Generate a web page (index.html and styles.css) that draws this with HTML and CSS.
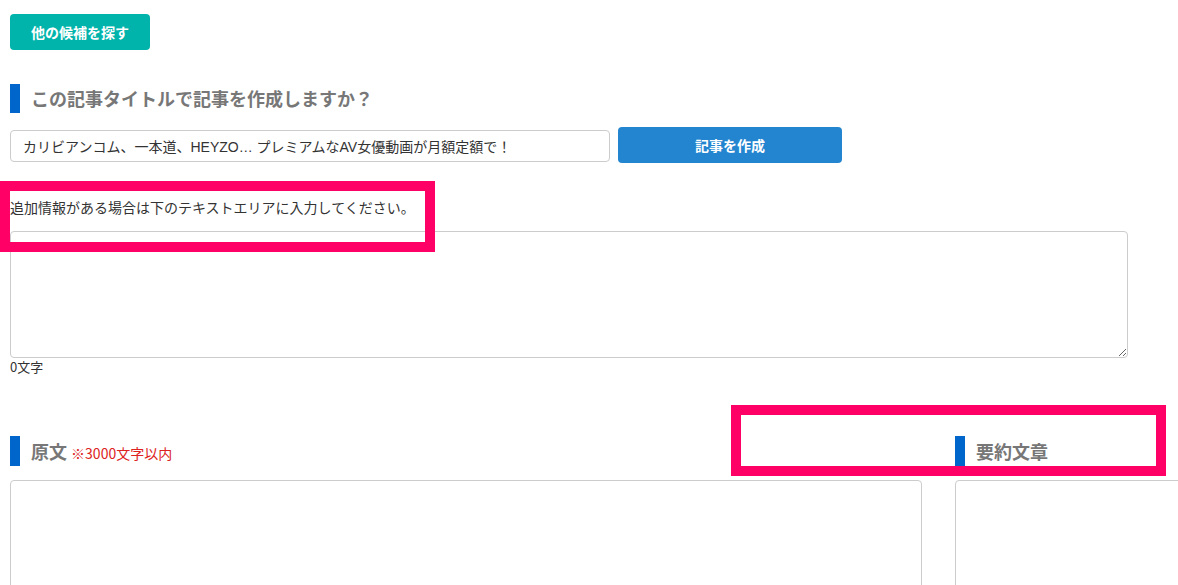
FILE: index.html
```html
<!DOCTYPE html>
<html lang="ja">
<head>
<meta charset="utf-8">
<title>記事作成</title>
<link rel="stylesheet" href="styles.css">
</head>
<body>
<div class="page">
  <button class="btn-alt" type="button">他の候補を探す</button>

  <h2 class="heading">この記事タイトルで記事を作成しますか？</h2>

  <div class="title-row">
    <input class="title-input" type="text" value="カリビアンコム、一本道、HEYZO… プレミアムなAV女優動画が月額定額で！">
    <button class="btn-create" type="button">記事を作成</button>
  </div>

  <p class="note">追加情報がある場合は下のテキストエリアに入力してください。</p>
  <textarea class="extra"></textarea>
  <div class="count">0文字</div>

  <div class="columns">
    <div class="col">
      <h2 class="heading">原文 <span class="limit">※3000文字以内</span></h2>
      <textarea class="big"></textarea>
    </div>
    <div class="col">
      <h2 class="heading">要約文章</h2>
      <textarea class="big"></textarea>
    </div>
  </div>
</div>

<div class="mark mark-1"></div>
<div class="mark mark-2"></div>
</body>
</html>
```

FILE: styles.css
```css
html, body {
  margin: 0;
  padding: 0;
  background: #fff;
  overflow: hidden;
}

body {
  font-family: "Liberation Sans", "Noto Sans CJK JP", sans-serif;
  color: #333;
  position: relative;
  width: 1178px;
  height: 585px;
}

.page {
  padding: 14px 0 0 10px;
}

.btn-alt {
  display: block;
  width: 140px;
  height: 36px;
  border: 0;
  border-radius: 4px;
  background: #00b4ab;
  color: #fff;
  font-family: "Noto Sans CJK JP", sans-serif;
  font-weight: 700;
  font-size: 14px;
  padding: 0;
}

.heading {
  margin: 34px 0 0;
  height: 29px;
  border-left: 10px solid #0066cc;
  padding-left: 11px;
  font-family: "Noto Sans CJK JP", sans-serif;
  font-size: 18px;
  font-weight: 700;
  line-height: 29px;
  color: #777;
}

.title-row {
  display: flex;
  align-items: flex-start;
  gap: 8px;
  margin-top: 14px;
}

.title-input {
  box-sizing: border-box;
  width: 600px;
  height: 32px;
  margin: 3px 0 0;
  border: 1px solid #ccc;
  border-radius: 4px;
  padding: 0 12px;
  font-family: "Liberation Sans", "Noto Sans CJK JP", sans-serif;
  font-size: 14px;
  color: #333;
}

.btn-create {
  width: 224px;
  height: 36px;
  border: 0;
  border-radius: 4px;
  background: #2385d0;
  color: #fff;
  font-family: "Noto Sans CJK JP", sans-serif;
  font-weight: 700;
  font-size: 14px;
  padding: 0;
}

.note {
  margin: 34px 0 14px;
  font-size: 14px;
  line-height: 20px;
  font-family: "Noto Sans CJK JP", sans-serif;
  color: #333;
}

.extra {
  display: block;
  box-sizing: border-box;
  width: 1118px;
  height: 127px;
  border: 1px solid #ccc;
  border-radius: 4px;
  margin: 0;
}

.count {
  font-family: "Noto Sans CJK JP", sans-serif;
  font-size: 13px;
  line-height: 18px;
  color: #333;
}

.columns {
  display: flex;
  gap: 33px;
  margin-top: 31px;
  width: 1857px;
}

.col {
  width: 912px;
  flex: none;
}

.col .heading {
  margin-top: 29px;
  height: 30px;
  line-height: 30px;
}

.limit {
  font-size: 14px;
  font-weight: 400;
  color: #dd2222;
}

.big {
  display: block;
  box-sizing: border-box;
  width: 912px;
  height: 240px;
  margin: 14px 0 0;
  border: 1px solid #ccc;
  border-radius: 4px;
}

.mark {
  position: absolute;
  box-sizing: border-box;
  width: 435px;
  height: 71px;
  border: 10px solid #ff0066;
  pointer-events: none;
}

.mark-1 {
  left: 0;
  top: 181px;
}

.mark-2 {
  left: 731px;
  top: 405px;
}
```
